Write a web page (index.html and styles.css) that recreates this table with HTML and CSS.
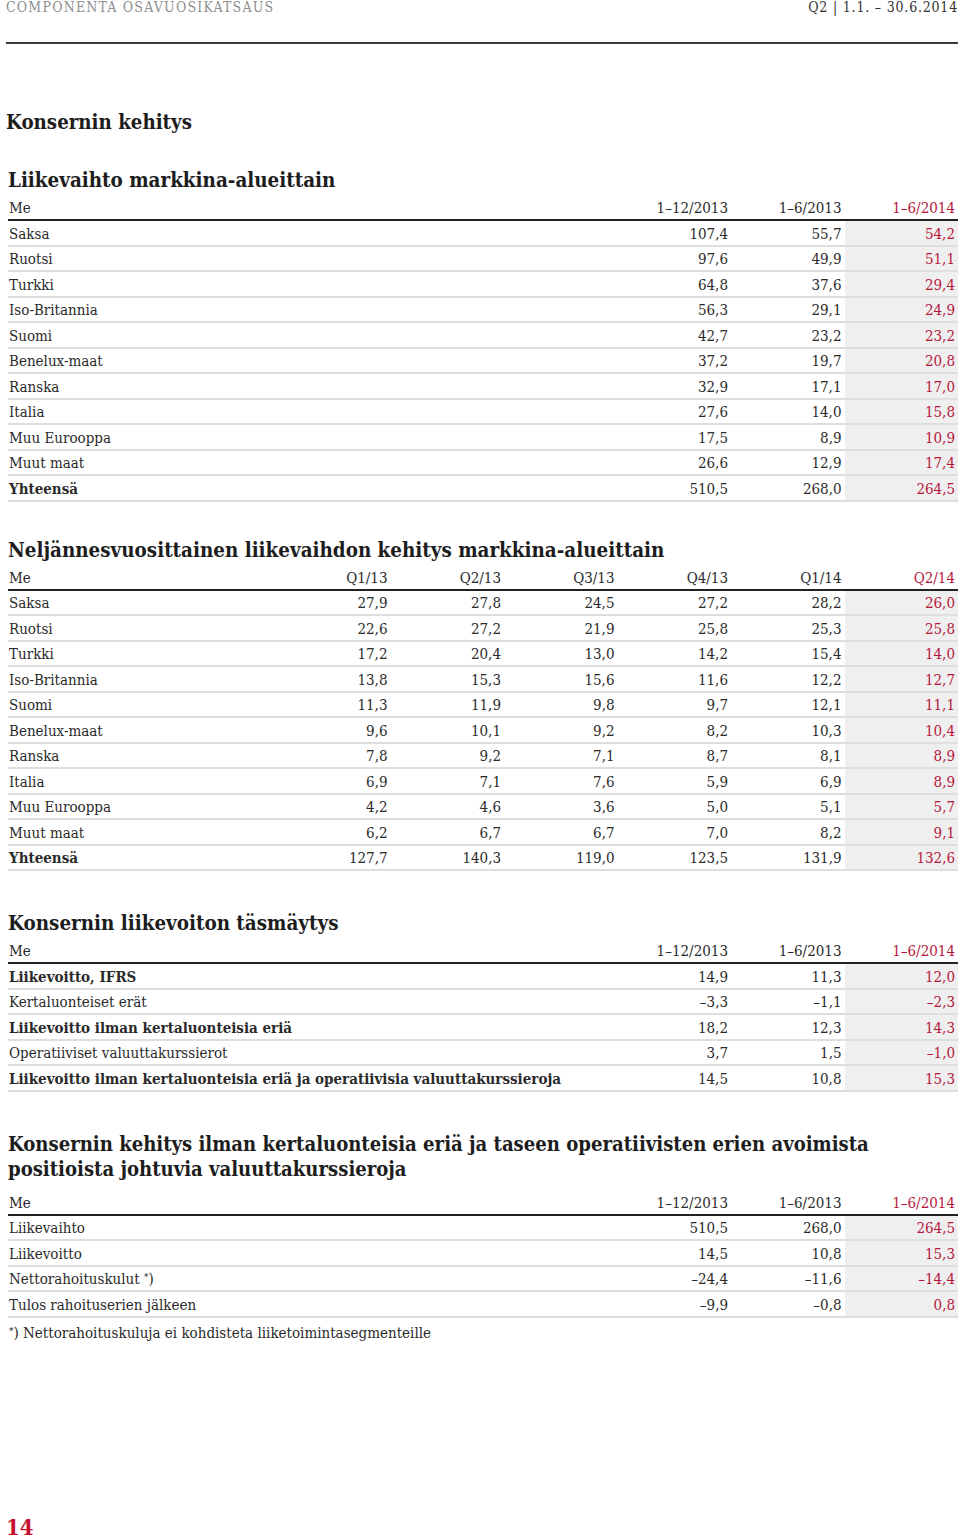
FILE: index.html
```html
<!DOCTYPE html>
<html lang="fi">
<head>
<meta charset="utf-8">
<title>Componenta osavuosikatsaus Q2 2014</title>
<link rel="stylesheet" href="styles.css">
</head>
<body>
<div class="page">
  <header class="top">
    <span class="doc">COMPONENTA OSAVUOSIKATSAUS</span>
    <span class="period">Q2 | 1.1. – 30.6.2014</span>
  </header>

  <h1 class="title">Konsernin kehitys</h1>

  <section class="block first">
    <h2>Liikevaihto markkina-alueittain</h2>
    <table class="data">
      <colgroup><col><col class="n"><col class="n"><col class="n"></colgroup>
      <thead><tr><th>Me</th><th>1–12/2013</th><th>1–6/2013</th><th class="cur">1–6/2014</th></tr></thead>
      <tbody>
        <tr><td>Saksa</td><td>107,4</td><td>55,7</td><td class="cur">54,2</td></tr>
        <tr><td>Ruotsi</td><td>97,6</td><td>49,9</td><td class="cur">51,1</td></tr>
        <tr><td>Turkki</td><td>64,8</td><td>37,6</td><td class="cur">29,4</td></tr>
        <tr><td>Iso-Britannia</td><td>56,3</td><td>29,1</td><td class="cur">24,9</td></tr>
        <tr><td>Suomi</td><td>42,7</td><td>23,2</td><td class="cur">23,2</td></tr>
        <tr><td>Benelux-maat</td><td>37,2</td><td>19,7</td><td class="cur">20,8</td></tr>
        <tr><td>Ranska</td><td>32,9</td><td>17,1</td><td class="cur">17,0</td></tr>
        <tr><td>Italia</td><td>27,6</td><td>14,0</td><td class="cur">15,8</td></tr>
        <tr><td>Muu Eurooppa</td><td>17,5</td><td>8,9</td><td class="cur">10,9</td></tr>
        <tr><td>Muut maat</td><td>26,6</td><td>12,9</td><td class="cur">17,4</td></tr>
        <tr><td class="b">Yhteensä</td><td>510,5</td><td>268,0</td><td class="cur">264,5</td></tr>
      </tbody>
    </table>
  </section>

  <section class="block second">
    <h2>Neljännesvuosittainen liikevaihdon kehitys markkina-alueittain</h2>
    <table class="data">
      <colgroup><col><col class="n"><col class="n"><col class="n"><col class="n"><col class="n"><col class="n"></colgroup>
      <thead><tr><th>Me</th><th>Q1/13</th><th>Q2/13</th><th>Q3/13</th><th>Q4/13</th><th>Q1/14</th><th class="cur">Q2/14</th></tr></thead>
      <tbody>
        <tr><td>Saksa</td><td>27,9</td><td>27,8</td><td>24,5</td><td>27,2</td><td>28,2</td><td class="cur">26,0</td></tr>
        <tr><td>Ruotsi</td><td>22,6</td><td>27,2</td><td>21,9</td><td>25,8</td><td>25,3</td><td class="cur">25,8</td></tr>
        <tr><td>Turkki</td><td>17,2</td><td>20,4</td><td>13,0</td><td>14,2</td><td>15,4</td><td class="cur">14,0</td></tr>
        <tr><td>Iso-Britannia</td><td>13,8</td><td>15,3</td><td>15,6</td><td>11,6</td><td>12,2</td><td class="cur">12,7</td></tr>
        <tr><td>Suomi</td><td>11,3</td><td>11,9</td><td>9,8</td><td>9,7</td><td>12,1</td><td class="cur">11,1</td></tr>
        <tr><td>Benelux-maat</td><td>9,6</td><td>10,1</td><td>9,2</td><td>8,2</td><td>10,3</td><td class="cur">10,4</td></tr>
        <tr><td>Ranska</td><td>7,8</td><td>9,2</td><td>7,1</td><td>8,7</td><td>8,1</td><td class="cur">8,9</td></tr>
        <tr><td>Italia</td><td>6,9</td><td>7,1</td><td>7,6</td><td>5,9</td><td>6,9</td><td class="cur">8,9</td></tr>
        <tr><td>Muu Eurooppa</td><td>4,2</td><td>4,6</td><td>3,6</td><td>5,0</td><td>5,1</td><td class="cur">5,7</td></tr>
        <tr><td>Muut maat</td><td>6,2</td><td>6,7</td><td>6,7</td><td>7,0</td><td>8,2</td><td class="cur">9,1</td></tr>
        <tr><td class="b">Yhteensä</td><td>127,7</td><td>140,3</td><td>119,0</td><td>123,5</td><td>131,9</td><td class="cur">132,6</td></tr>
      </tbody>
    </table>
  </section>

  <section class="block third">
    <h2>Konsernin liikevoiton täsmäytys</h2>
    <table class="data">
      <colgroup><col><col class="n"><col class="n"><col class="n"></colgroup>
      <thead><tr><th>Me</th><th>1–12/2013</th><th>1–6/2013</th><th class="cur">1–6/2014</th></tr></thead>
      <tbody>
        <tr><td class="b">Liikevoitto, IFRS</td><td>14,9</td><td>11,3</td><td class="cur">12,0</td></tr>
        <tr><td>Kertaluonteiset erät</td><td>–3,3</td><td>–1,1</td><td class="cur">–2,3</td></tr>
        <tr><td class="b">Liikevoitto ilman kertaluonteisia eriä</td><td>18,2</td><td>12,3</td><td class="cur">14,3</td></tr>
        <tr><td>Operatiiviset valuuttakurssierot</td><td>3,7</td><td>1,5</td><td class="cur">–1,0</td></tr>
        <tr><td class="b">Liikevoitto ilman kertaluonteisia eriä ja operatiivisia valuuttakurssieroja</td><td>14,5</td><td>10,8</td><td class="cur">15,3</td></tr>
      </tbody>
    </table>
  </section>

  <section class="block two-line">
    <h2>Konsernin kehitys ilman kertaluonteisia eriä ja taseen operatiivisten erien avoimista positioista johtuvia valuuttakurssieroja</h2>
    <table class="data">
      <colgroup><col><col class="n"><col class="n"><col class="n"></colgroup>
      <thead><tr><th>Me</th><th>1–12/2013</th><th>1–6/2013</th><th class="cur">1–6/2014</th></tr></thead>
      <tbody>
        <tr><td>Liikevaihto</td><td>510,5</td><td>268,0</td><td class="cur">264,5</td></tr>
        <tr><td>Liikevoitto</td><td>14,5</td><td>10,8</td><td class="cur">15,3</td></tr>
        <tr><td>Nettorahoituskulut <sup>*</sup>)</td><td>–24,4</td><td>–11,6</td><td class="cur">–14,4</td></tr>
        <tr><td>Tulos rahoituserien jälkeen</td><td>–9,9</td><td>–0,8</td><td class="cur">0,8</td></tr>
      </tbody>
    </table>
    <p class="note"><sup>*</sup>) Nettorahoituskuluja ei kohdisteta liiketoimintasegmenteille</p>
  </section>

  <footer class="pageno">14</footer>
</div>
</body>
</html>
```

FILE: styles.css
```css
html, body {
  margin: 0;
  padding: 0;
  background: #fff;
}

body {
  font-family: "DejaVu Serif", "Liberation Serif", serif;
  font-stretch: condensed;
  color: #2a2a2a;
}

.page {
  width: 952px;
  margin-left: 6px;
}

.top {
  display: flex;
  justify-content: space-between;
  align-items: flex-start;
  height: 42px;
  border-bottom: 2px solid #3a3a3a;
  font-size: 14px;
  line-height: 14px;
}

.doc {
  color: #8e8e8e;
  letter-spacing: 1.2px;
}

.period {
  color: #333;
  letter-spacing: 0.8px;
}

.title {
  margin: 65px 0 0;
  font-size: 20.3px;
  line-height: 26px;
  font-weight: bold;
  color: #1d1d1d;
}

.block {
  margin-top: 40px;
}

.block.first {
  margin-top: 32px;
}

.block.second {
  margin-top: 35px;
}

.block.third {
  margin-top: 39px;
}

.block h2 {
  margin: 0 0 3px 2px;
  font-size: 20.4px;
  line-height: 26px;
  font-weight: bold;
  color: #1d1d1d;
}

.block.two-line h2 {
  font-size: 20.1px;
  line-height: 25px;
  margin-bottom: 9px;
}

.data {
  width: 950px;
  margin-left: 2px;
  border-collapse: collapse;
  table-layout: fixed;
  font-size: 15px;
}

.data col.n {
  width: 113.5px;
}

.data th,
.data td {
  padding: 1.5px 3px 0 1px;
  line-height: 22px;
  text-align: right;
  white-space: nowrap;
  border-bottom: 2px solid #dedede;
}

.data th {
  font-weight: normal;
  padding-top: 1px;
  line-height: 22px;
  border-bottom: 2px solid #222;
}

.data th:first-child,
.data td:first-child {
  text-align: left;
}

.data .b {
  font-weight: bold;
}

.data th.cur {
  color: #b5173b;
}

.data td.cur {
  color: #b5173b;
  background: #efefef;
}

.data sup,
.note sup {
  font-size: 10px;
  vertical-align: 4px;
  line-height: 0;
}

.note {
  margin: 5px 0 0 3px;
  font-size: 15px;
  line-height: 20px;
}

.pageno {
  margin-top: 172px;
  font-size: 22px;
  line-height: 24px;
  font-weight: bold;
  color: #c8102e;
}
```
